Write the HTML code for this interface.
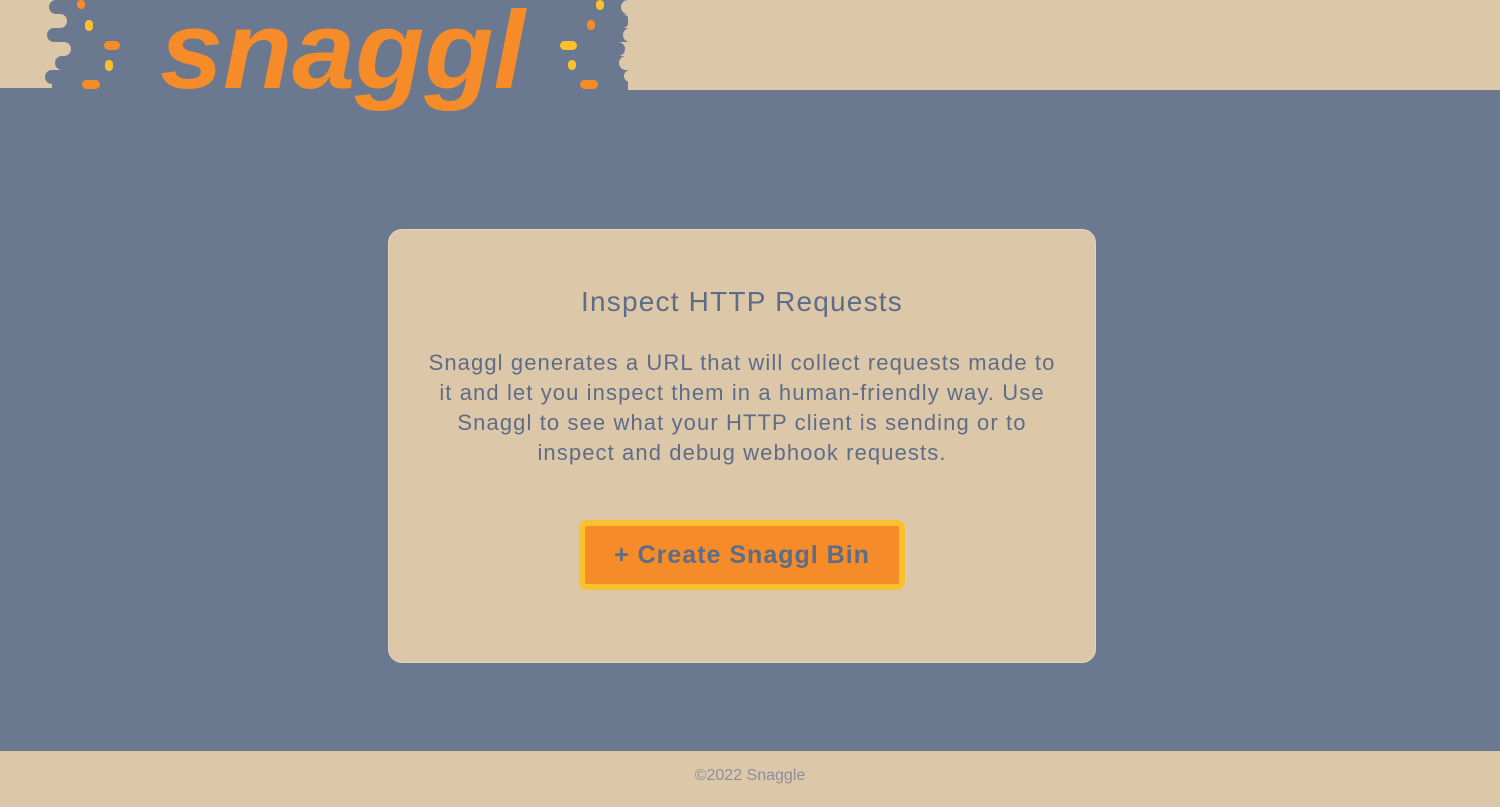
<!DOCTYPE html>
<html><head><meta charset="utf-8"><style>
html,body{margin:0;padding:0}
body{width:1500px;height:807px;background:#6a798f;position:relative;overflow:hidden;font-family:"Liberation Sans",sans-serif}
.card{position:absolute;left:388px;top:229px;width:708px;height:434px;background:#ddc7a9;border-radius:14px;border:1px solid #e6d3b8;box-sizing:border-box}
h1{font-weight:normal;font-size:28px;color:#5d6d88;text-align:center;letter-spacing:1.2px}
.p{position:absolute;left:388px;top:348px;width:708px;text-align:center;font-size:22px;line-height:30px;color:#5d6d88;letter-spacing:1.1px}
.btn{position:absolute;left:579px;top:520px;width:314px;height:58px;background:#f68b29;border:6px solid #fbc02d;border-radius:8px;text-align:center;line-height:58px;font-weight:bold;font-size:25px;color:#5d6d88;letter-spacing:1px}
.foot{position:absolute;left:0;top:751px;width:1500px;height:56px;background:#ddc7a9;text-align:center;line-height:50px;font-size:16px;color:#8a8f99}
</style></head><body>
<svg style="position:absolute;left:0;top:0" width="1500" height="160">
<rect x="628" y="0" width="872" height="90" fill="#ddc7a9"/>
<path d="M0 0 H56 a7 7 0 0 0 0 14 H60 a7 7 0 0 1 0 14 H54 a7 7 0 0 0 0 14 H64 a7 7 0 0 1 0 14 H62 a7 7 0 0 0 0 14 H52 a7 7 0 0 0 0 14 V88 H0 Z" fill="#ddc7a9"/>
<path d="M640 0 H628 a7 7 0 0 0 0 14 H622 a7 7 0 0 1 0 14 H630 a7 7 0 0 0 0 14 H618 a7 7 0 0 1 0 14 H626 a7 7 0 0 0 0 14 H630 a5 5 0 0 0 0 12 V90 H640 Z" fill="#ddc7a9"/>
<rect x="77" y="0" width="8" height="9" rx="4" fill="#f68b29"/>
<rect x="85" y="20" width="8" height="11" rx="4" fill="#fbc02d"/>
<rect x="104" y="41" width="16" height="9" rx="4.5" fill="#f68b29"/>
<rect x="105" y="60" width="8" height="11" rx="4" fill="#fbc02d"/>
<rect x="82" y="80" width="18" height="9" rx="4.5" fill="#f68b29"/>
<rect x="596" y="0" width="8" height="10" rx="4" fill="#fbc02d"/>
<rect x="587" y="20" width="8" height="10" rx="4" fill="#f68b29"/>
<rect x="560" y="41" width="17" height="9" rx="4.5" fill="#fbc02d"/>
<rect x="568" y="60" width="8" height="10" rx="4" fill="#fbc02d"/>
<rect x="580" y="80" width="18" height="9" rx="4.5" fill="#f68b29"/>
<text x="160" y="88" font-family="Liberation Sans" font-weight="bold" font-style="italic" font-size="110" fill="#f68b29" textLength="365" lengthAdjust="spacingAndGlyphs">snaggl</text>
</svg>
<div class="card"></div>
<h1 style="position:absolute;margin:0;left:388px;width:708px;top:286px">Inspect HTTP Requests</h1>
<div class="p">Snaggl generates a URL that will collect requests made to<br>it and let you inspect them in a human-friendly way. Use<br>Snaggl to see what your HTTP client is sending or to<br>inspect and debug webhook requests.</div>
<div class="btn">+ Create Snaggl Bin</div>
<div class="foot">©2022 Snaggle</div>
</body></html>
